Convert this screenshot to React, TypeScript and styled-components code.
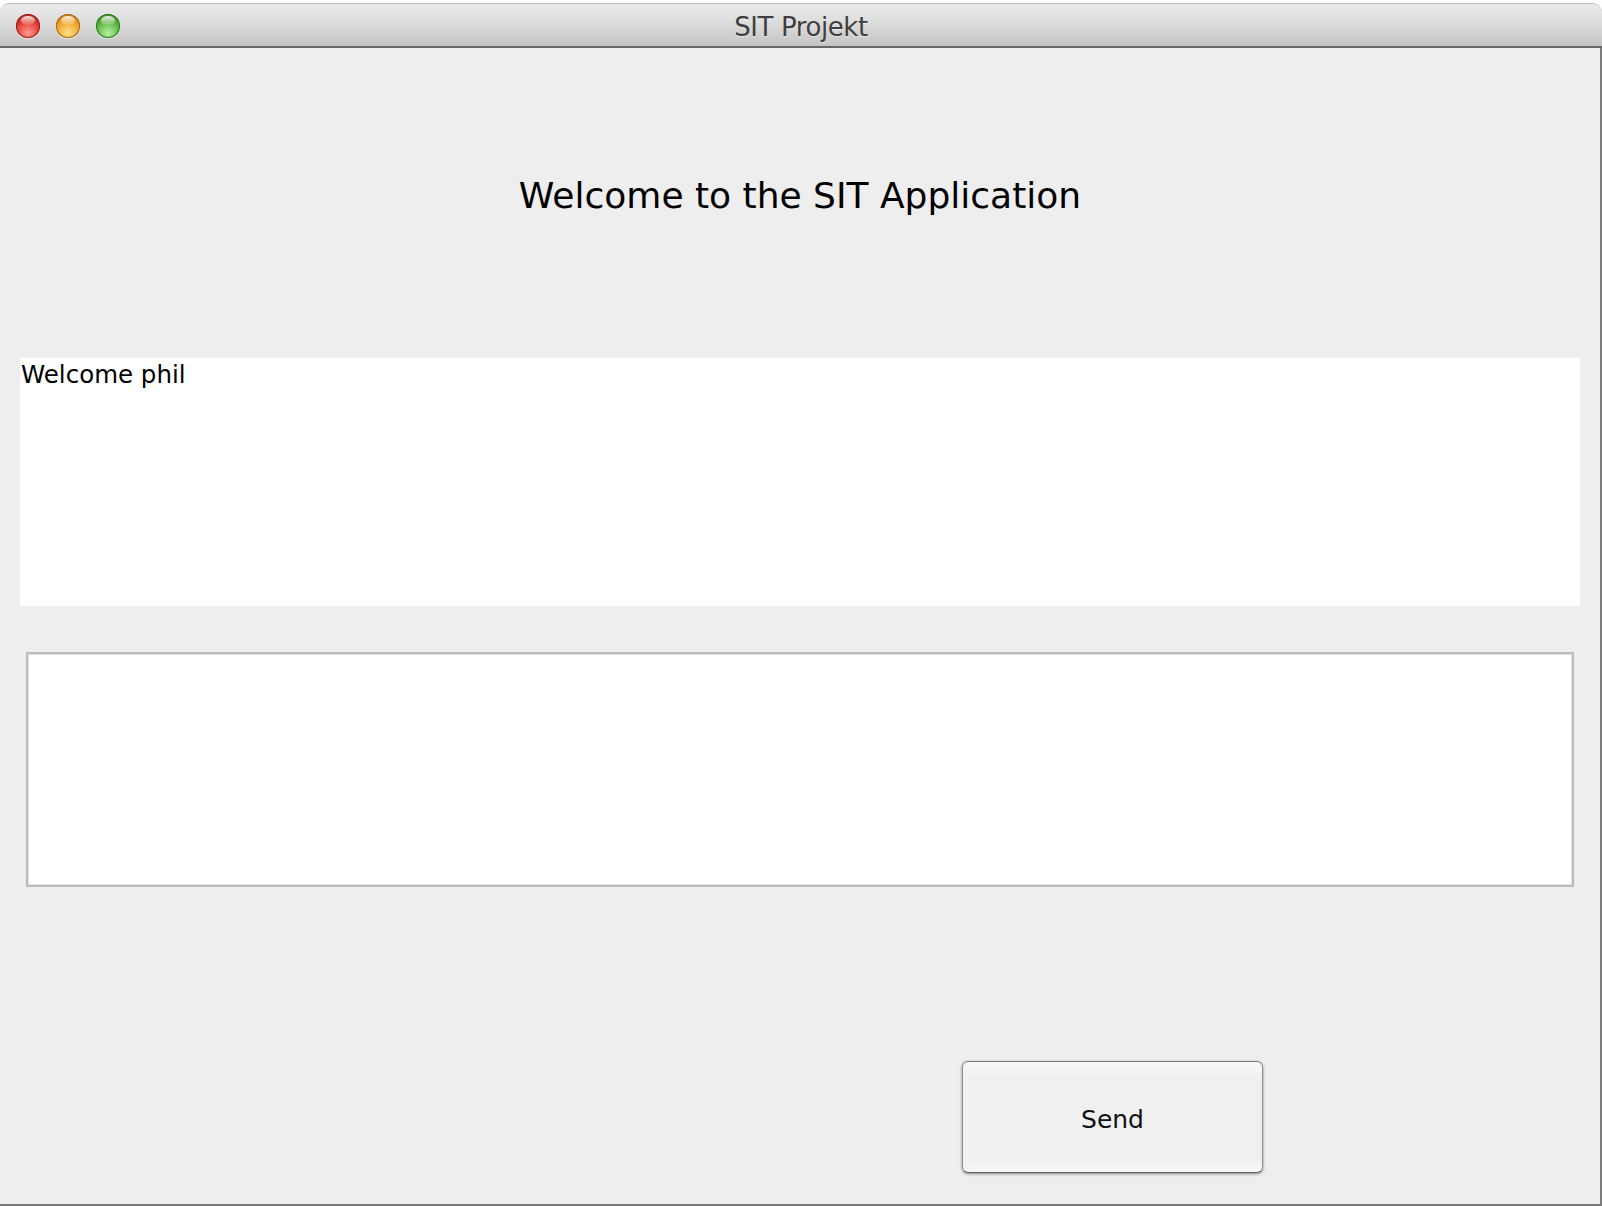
import React from "react";
import styled, { createGlobalStyle } from "styled-components";

const Global = createGlobalStyle`
  html, body { margin: 0; padding: 0; background: #ffffff; }
  body { font-family: "DejaVu Sans", "Liberation Sans", sans-serif; }
  * { box-sizing: border-box; }
`;

const Window = styled.div`
  width: 1602px;
  height: 1203px;
  margin-top: 3px;
  display: flex;
  flex-direction: column;
`;

const TitleBar = styled.div`
  height: 45px;
  flex: none;
  display: grid;
  grid-template-columns: 1fr auto 1fr;
  align-items: center;
  padding-top: 2px;
  background: linear-gradient(#ebebeb 0%, #dcdcdc 45%, #c4c4c4 100%);
  border-top: 1px solid #bcbcbc;
  border-bottom: 2px solid #676767;
  border-radius: 9px 9px 0 0;
`;

const Lights = styled.div`
  display: flex;
  gap: 16px;
  padding-left: 16px;
`;

const Light = styled.span<{ $base: string; $dark: string; $glow: string }>`
  position: relative;
  width: 24px;
  height: 24px;
  border-radius: 50%;
  background: radial-gradient(circle at 50% 80%, ${(p) => p.$glow} 0%, ${(p) => p.$base} 55%, ${(p) => p.$dark} 100%);
  box-shadow: inset 0 0 0 1px ${(p) => p.$dark}, 0 1px 1px rgba(255, 255, 255, 0.6);
  &::after {
    content: "";
    position: absolute;
    left: 5px;
    top: 2px;
    width: 14px;
    height: 9px;
    border-radius: 50%;
    background: linear-gradient(rgba(255, 255, 255, 0.85), rgba(255, 255, 255, 0.1));
  }
`;

const Title = styled.div`
  font-family: "DejaVu Sans", sans-serif;
  font-size: 26px;
  letter-spacing: -0.4px;
  color: #3f3f3f;
  text-shadow: 0 1px 0 rgba(255, 255, 255, 0.5);
  line-height: 30px;
  padding-top: 2px;
`;

const Content = styled.div`
  flex: 1;
  display: flex;
  flex-direction: column;
  background: #eeeeee;
  border-right: 2px solid #7c7c7c;
  border-bottom: 2px solid #777777;
`;

const Heading = styled.h1`
  margin: 0;
  padding-top: 127px;
  font-family: "DejaVu Sans", sans-serif;
  font-weight: normal;
  font-size: 36px;
  letter-spacing: 0;
  line-height: 42px;
  text-align: center;
  color: #000;
`;

const Output = styled.div`
  margin: 141px 20px 0 20px;
  height: 248px;
  background: #ffffff;
  padding: 3px 1px;
  font-size: 24.5px;
  line-height: 28px;
  color: #000;
`;

const Input = styled.div`
  margin: 46px 26px 0 26px;
  height: 235px;
  background: #ffffff;
  border: 2px solid #bdbdbd;
  box-shadow: inset 0 0 0 1px #e2e2e2;
`;

const ButtonRow = styled.div`
  margin-top: 174px;
  display: flex;
  justify-content: flex-end;
  padding-right: 337px;
`;

const Button = styled.button`
  width: 301px;
  height: 112px;
  padding: 5px 0 0 0;
  font-family: "DejaVu Sans", sans-serif;
  font-size: 25px;
  line-height: 28px;
  color: #111;
  background: linear-gradient(#f8f8f8, #f0f0f0 15%, #f0f0f0 88%, #f7f7f7);
  border: 1px solid #8e8e8e;
  border-top-color: #7a7a7a;
  border-bottom-color: #5e5e5e;
  border-radius: 6px;
  box-shadow: 0 1px 3px rgba(0, 0, 0, 0.45);
`;

export default function App() {
  return (
    <>
      <Global />
      <Window>
        <TitleBar>
          <Lights>
            <Light $base="#e0392f" $dark="#9a1f18" $glow="#ff9a90" />
            <Light $base="#eea42a" $dark="#a8680e" $glow="#ffe08a" />
            <Light $base="#5cb43e" $dark="#2f7a1f" $glow="#b8f0a0" />
          </Lights>
          <Title>SIT Projekt</Title>
          <div />
        </TitleBar>
        <Content>
          <Heading>Welcome to the SIT Application</Heading>
          <Output>Welcome phil</Output>
          <Input />
          <ButtonRow>
            <Button>Send</Button>
          </ButtonRow>
        </Content>
      </Window>
    </>
  );
}
